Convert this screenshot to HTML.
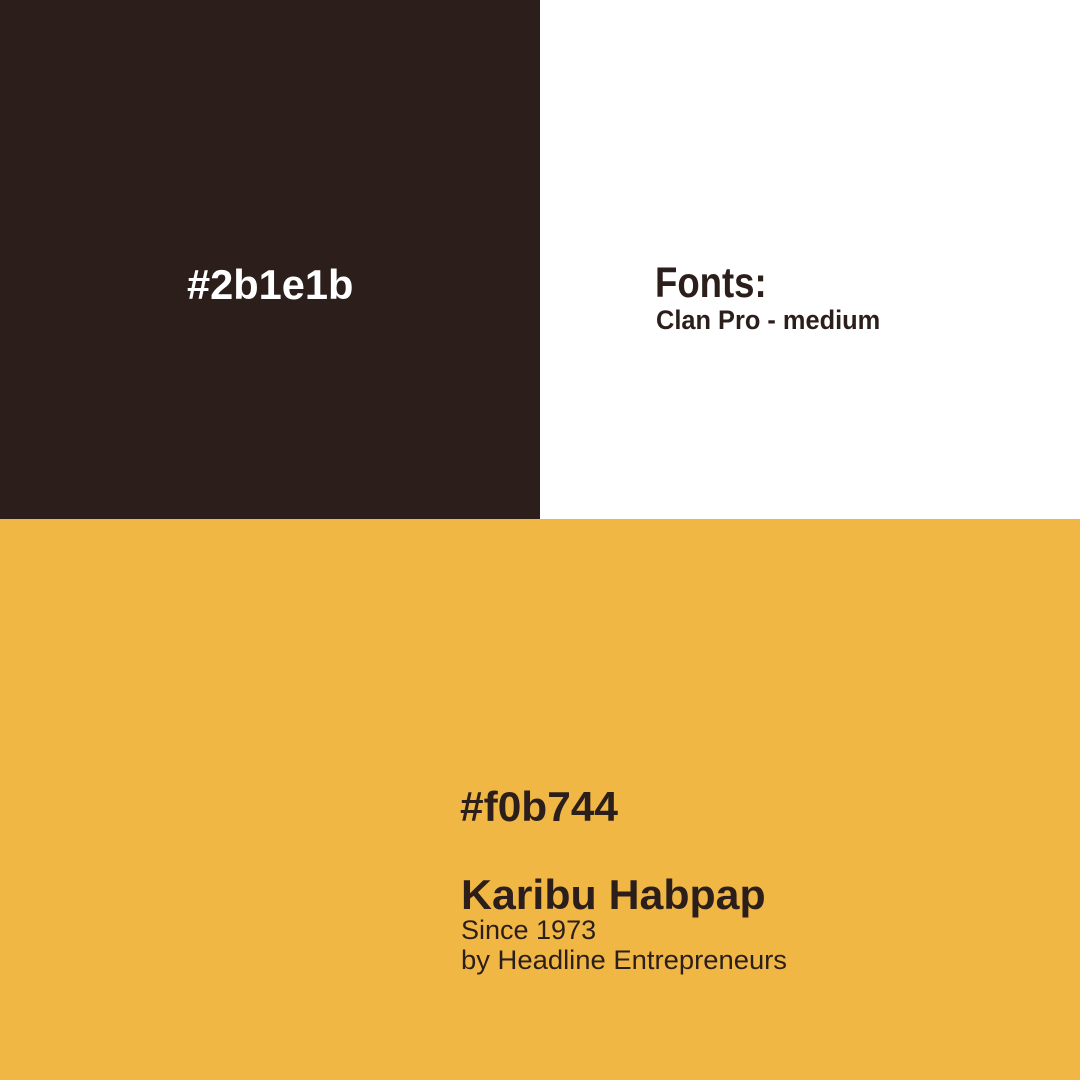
<!DOCTYPE html>
<html><head><meta charset="utf-8"><style>
html,body{margin:0;padding:0}
body{width:1080px;height:1080px;position:relative;overflow:hidden;background:#fff;font-family:"Liberation Sans",sans-serif}
.d{position:absolute;left:0;top:0;width:540px;height:519px;background:#2b1e1b}
.y{position:absolute;left:0;top:519px;width:1080px;height:561px;background:#f0b744}
.t{position:absolute;white-space:nowrap;line-height:1;transform-origin:left top}
</style></head><body>
<div class="d"></div><div class="y"></div>
<div class="t" style="left:187px;top:264px;font-size:42px;font-weight:bold;color:#fff;transform:scaleX(0.99)">#2b1e1b</div>
<div class="t" style="left:655px;top:262px;font-size:43px;font-weight:bold;color:#2b1e1b;transform:scaleX(0.85)">Fonts:</div>
<div class="t" style="left:656px;top:307px;font-size:27px;font-weight:bold;color:#2b1e1b;transform:scaleX(0.94)">Clan Pro - medium</div>
<div class="t" style="left:460px;top:786px;font-size:42px;font-weight:bold;color:#2b1e1b;transform:scaleX(1.01)">#f0b744</div>
<div class="t" style="left:461px;top:874px;font-size:42px;font-weight:bold;color:#2b1e1b;transform:scaleX(1.02)">Karibu Habpap</div>
<div class="t" style="left:461px;top:917px;font-size:27px;color:#2b1e1b">Since 1973</div>
<div class="t" style="left:461px;top:947px;font-size:27px;color:#2b1e1b;transform:scaleX(1.015)">by Headline Entrepreneurs</div>
</body></html>
